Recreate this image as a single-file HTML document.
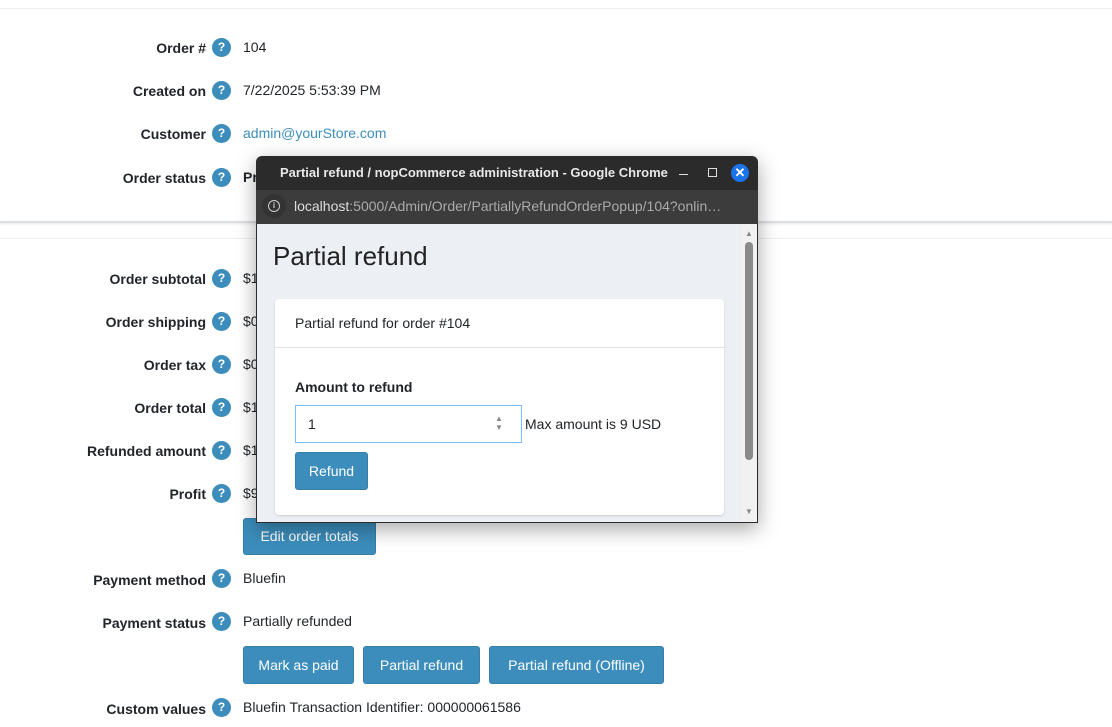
<!DOCTYPE html>
<html><head><meta charset="utf-8"><style>
*{box-sizing:border-box;margin:0;padding:0}
body{width:1112px;height:727px;background:#fff;font-family:"Liberation Sans",sans-serif;font-size:14px;color:#212529;position:relative;overflow:hidden}
.a{position:absolute;white-space:nowrap}
.lbl{position:absolute;right:906px;font-weight:bold;font-size:14px;white-space:nowrap}
.q{position:absolute;left:212px;width:19px;height:19px;border-radius:50%;background:#3c8dbc;color:#fff;font-size:12px;font-weight:bold;text-align:center;line-height:19px}
.v{position:absolute;left:243px;white-space:nowrap}
.btn{position:absolute;background:#3c8dbc;border:1px solid #367fa9;border-radius:3px;color:#fff;font-size:14px;text-align:center;white-space:nowrap}
</style></head><body>
<div class="a" style="left:0;top:8px;width:1112px;height:1px;background:#eceef0"></div>
<div class="a" style="left:0;top:221px;width:1112px;height:2px;background:#dcdfe2;box-shadow:0 1px 2px rgba(0,0,0,.1)"></div>
<div class="a" style="left:0;top:238px;width:1112px;height:1px;background:#eceef0"></div>

<div class="lbl" style="top:40px">Order #</div><div class="q" style="top:38px">?</div><div class="v" style="top:39px">104</div>
<div class="lbl" style="top:83px">Created on</div><div class="q" style="top:81px">?</div><div class="v" style="top:82px">7/22/2025 5:53:39 PM</div>
<div class="lbl" style="top:126px">Customer</div><div class="q" style="top:124px">?</div><div class="v" style="top:125px;color:#3c8dbc">admin@yourStore.com</div>
<div class="lbl" style="top:170px">Order status</div><div class="q" style="top:168px">?</div><div class="v" style="top:169px;font-weight:bold">Pr</div>

<div class="lbl" style="top:271px">Order subtotal</div><div class="q" style="top:269px">?</div><div class="v" style="top:270px">$1</div>
<div class="lbl" style="top:314px">Order shipping</div><div class="q" style="top:312px">?</div><div class="v" style="top:313px">$0</div>
<div class="lbl" style="top:357px">Order tax</div><div class="q" style="top:355px">?</div><div class="v" style="top:356px">$0</div>
<div class="lbl" style="top:400px">Order total</div><div class="q" style="top:398px">?</div><div class="v" style="top:399px">$1</div>
<div class="lbl" style="top:443px">Refunded amount</div><div class="q" style="top:441px">?</div><div class="v" style="top:442px">$1</div>
<div class="lbl" style="top:486px">Profit</div><div class="q" style="top:484px">?</div><div class="v" style="top:485px">$9</div>
<div class="btn" style="left:243px;top:518px;width:133px;height:37px;line-height:35px">Edit order totals</div>
<div class="lbl" style="top:572px">Payment method</div><div class="q" style="top:569px">?</div><div class="v" style="top:570px">Bluefin</div>
<div class="lbl" style="top:615px">Payment status</div><div class="q" style="top:612px">?</div><div class="v" style="top:613px">Partially refunded</div>
<div class="btn" style="left:243px;top:646px;width:111px;height:38px;line-height:36px">Mark as paid</div>
<div class="btn" style="left:363px;top:646px;width:117px;height:38px;line-height:36px">Partial refund</div>
<div class="btn" style="left:489px;top:646px;width:175px;height:38px;line-height:36px">Partial refund (Offline)</div>
<div class="lbl" style="top:701px">Custom values</div><div class="q" style="top:698px">?</div><div class="v" style="top:699px">Bluefin Transaction Identifier: 000000061586</div>

<div class="a" style="left:256px;top:156px;width:502px;height:367px;border-radius:6px 6px 0 0;box-shadow:0 6px 20px rgba(0,0,0,.35);background:#2b2b2b;overflow:hidden">
 <div class="a" style="left:24px;top:9px;color:#e8e8e8;font-size:13px;font-weight:bold">Partial refund / nopCommerce administration - Google Chrome</div>
 <div class="a" style="left:423px;top:18px;width:9px;height:1px;background:#ddd"></div>
 <div class="a" style="left:452px;top:12px;width:9px;height:9px;border:1px solid #ddd"></div>
 <div class="a" style="left:475px;top:8px;width:18px;height:18px;border-radius:50%;background:#1a73e8;color:#fff;font-size:13px;font-weight:bold;text-align:center;line-height:18px">✕</div>
 <div class="a" style="left:0;top:34px;width:502px;height:34px;background:#3c3c3c">
  <div class="a" style="left:6px;top:4px;width:24px;height:24px;border-radius:50%;background:#333"></div>
  <div class="a" style="left:12px;top:10px;width:12px;height:12px;border:1.5px solid #ccc;border-radius:50%;color:#ccc;font-size:8px;text-align:center;line-height:9px;font-weight:bold">i</div>
  <div class="a" style="left:38px;top:8px;font-size:14px;color:#aaa"><span style="color:#ddd">localhost</span>:5000/Admin/Order/PartiallyRefundOrderPopup/104?onlin…</div>
 </div>
 <div class="a" style="left:1px;top:68px;width:500px;height:298px;background:#ecf0f5">
  <div class="a" style="left:16px;top:17px;font-size:26px;color:#222">Partial refund</div>
  <div class="a" style="left:18px;top:75px;width:449px;height:216px;background:#fff;border-radius:4px;box-shadow:0 1px 2px rgba(0,0,0,.15)">
   <div class="a" style="left:20px;top:16px;font-size:14px">Partial refund for order #104</div>
   <div class="a" style="left:0;top:48px;width:449px;height:1px;background:#dfe2e5"></div>
   <div class="a" style="left:20px;top:80px;font-size:14px;font-weight:bold">Amount to refund</div>
   <div class="a" style="left:20px;top:106px;width:227px;height:38px;border:1px solid #80bdff"><div class="a" style="left:12px;top:10px">1</div><div class="a" style="left:199px;top:8px;font-size:8px;color:#888;line-height:9px">▲<br>▼</div></div>
   <div class="a" style="left:250px;top:117px">Max amount is 9 USD</div>
   <div class="btn" style="left:20px;top:153px;width:73px;height:38px;line-height:36px">Refund</div>
  </div>
  <div class="a" style="left:484px;top:0;width:16px;height:298px;background:#f1f1f1">
   <div class="a" style="left:4px;top:5px;font-size:8px;color:#888">▲</div>
   <div class="a" style="left:4px;top:18px;width:8px;height:218px;border-radius:4px;background:#8a8a8a"></div>
   <div class="a" style="left:4px;top:283px;font-size:8px;color:#888">▼</div>
  </div>
 </div>
</div>
</body></html>
